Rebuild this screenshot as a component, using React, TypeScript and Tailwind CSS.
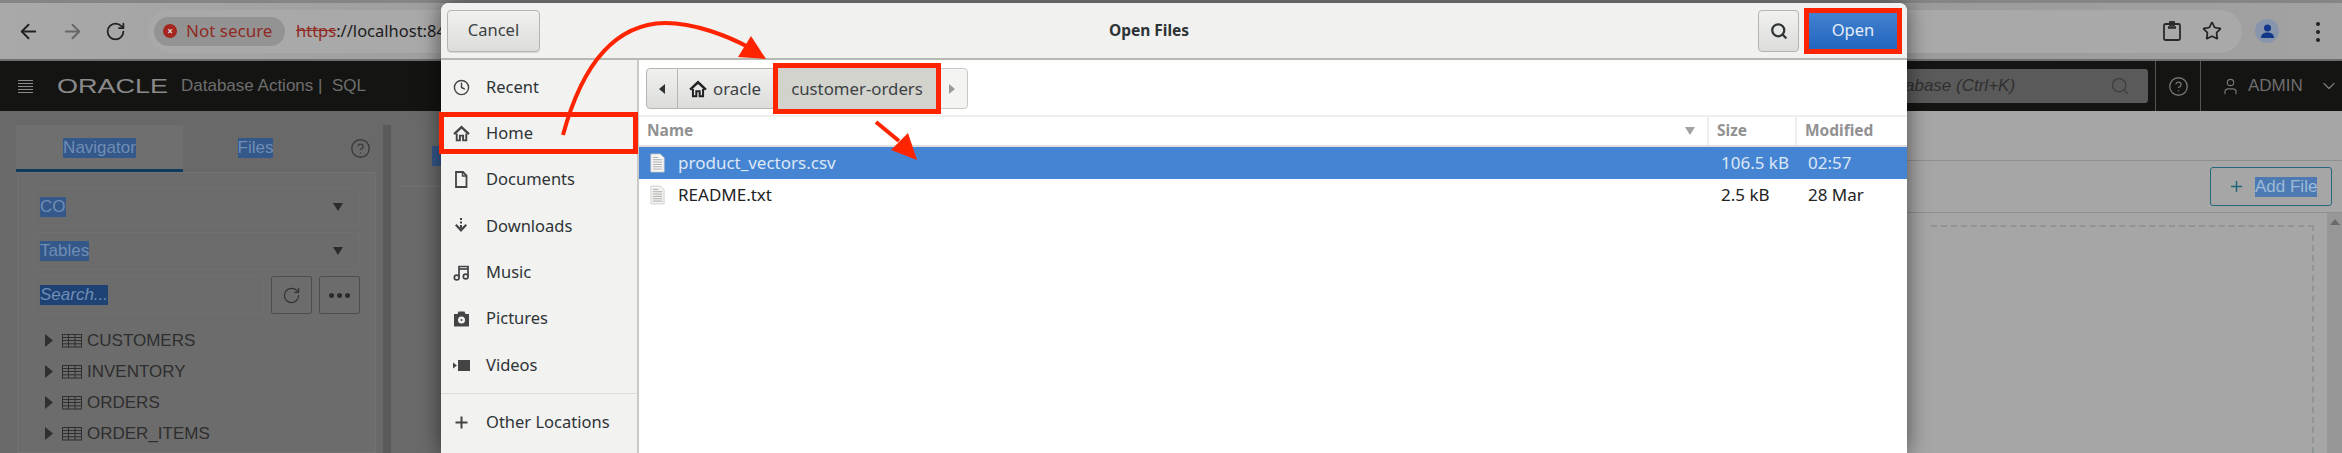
import React from "react";
import { ArrowLeft, ArrowRight, RotateCw, Star, Search, ChevronDown, Plus, CircleHelp, User, Clock } from "lucide-react";

const Tri = ({ className = "" }: { className?: string }) => (
  <svg width="16" height="10" viewBox="0 0 16 10" className={className}><path d="M3 1h10L8 9z" fill="currentColor" /></svg>
);

const HomeIcon = ({ size = 16 }: { size?: number }) => (
  <svg width={size} height={size} viewBox="0 0 16 16" fill="none" className="shrink-0">
    <path d="M1 8.500 8 2l7 6.500" stroke="currentColor" strokeWidth="2.200" />
    <path d="M3.500 8v6.500h3V10h3v4.500h3V8" stroke="currentColor" strokeWidth="1.800" />
  </svg>
);
const DocIcon = () => (
  <svg width="16" height="17" viewBox="0 0 16 17" fill="none"><path d="M3 1h7l3.500 3.500V16H3z" stroke="currentColor" strokeWidth="1.800" /><path d="M9.500 1v4h4" stroke="currentColor" strokeWidth="1.400" /></svg>
);
const DownIcon = () => (
  <svg width="16" height="16" viewBox="0 0 16 16" fill="currentColor"><rect x="7" y="0" width="2" height="2" /><rect x="7" y="3.500" width="2" height="2" /><rect x="7" y="7" width="2" height="3" /><path d="M2 7.500l1.500-1.500L8 10.500 12.500 6 14 7.500 8 14z" /></svg>
);
const MusicIcon = () => (
  <svg width="17" height="17" viewBox="0 0 17 17" fill="none" stroke="currentColor" strokeWidth="1.700"><circle cx="3.700" cy="13.500" r="2.400" /><circle cx="12.700" cy="12.500" r="2.400" /><path d="M6 13V2.500h9V12" /><path d="M6 5h9" /></svg>
);
const CamIcon = () => (
  <svg width="17" height="16" viewBox="0 0 17 16"><path fillRule="evenodd" fill="currentColor" d="M1 3h3.500l1-2.500h6l1 2.500H16v12.500H1zM8.500 5.500a3.500 3.500 0 1 0 0 7 3.500 3.500 0 0 0 0-7zM8.500 8a1 1 0 1 1 0 2 1 1 0 0 1 0-2z" /></svg>
);
const VidIcon = () => (
  <svg width="17" height="13" viewBox="0 0 17 13" fill="currentColor"><rect x="5" y="1" width="12" height="11" /><path d="M0 3.500 4 6.500 0 9.500z" /></svg>
);
const PlusIcon = () => (
  <svg width="13" height="13" viewBox="0 0 13 13" fill="currentColor"><rect x="5.500" y="0.500" width="2" height="12" /><rect x="0.500" y="5.500" width="12" height="2" /></svg>
);
const FileIcon = ({ dim = false }: { dim?: boolean }) => (
  <svg width="15" height="20" viewBox="0 0 16 20" className="shrink-0">
    <path d="M1 .5h10l4 4v15H1z" fill={dim ? "#f4f4f3" : "#fafafa"} stroke="#cfcfcc" />
    <path d="M3 4h6M3 6.500h10M3 9h10M3 11.500h10M3 14h10M3 16.500h10" stroke="#a8a8a5" strokeWidth="1" />
  </svg>
);
const TableIcon = () => (
  <svg width="20" height="14" viewBox="0 0 20 14" fill="none" stroke="#2f2f2f" strokeWidth="1" className="shrink-0">
    <rect x=".5" y=".5" width="19" height="12.500" /><path d="M.5 3.500h19M.5 6.500h19M.5 9.800h19M6.500 .5v12.500M13 .5v12.500" />
  </svg>
);

const places = [
  { t: "Recent", i: <Clock size={17} strokeWidth={2} />, h: "h-[46px]" },
  { t: "Home", i: <HomeIcon size={17} />, h: "h-[46px]" },
  { t: "Documents", i: <DocIcon />, h: "h-[47px]" },
  { t: "Downloads", i: <DownIcon />, h: "h-[46px]" },
  { t: "Music", i: <MusicIcon />, h: "h-[46px]" },
  { t: "Pictures", i: <CamIcon />, h: "h-[47px]" },
  { t: "Videos", i: <VidIcon />, h: "h-[46px]" },
];

const TreeRow = ({ t, className }: { t: string; className: string }) => (
  <div className={`flex items-center ${className}`}>
    <svg width="8" height="13" viewBox="0 0 8 13" className="ml-[12px] mr-[9px]"><path d="M0 0l8 6.500-8 6.500z" fill="#2f2f2f" /></svg>
    <TableIcon />
    <span className="ml-[5px] text-[17px] text-[#2e2e2e]">{t}</span>
  </div>
);

const SelectBox = ({ t, className = "" }: { t: string; className?: string }) => (
  <div className={`h-[38px] flex items-center justify-between border border-[#707070] rounded-[2px] pl-[6px] pr-[13px] ${className}`}>
    <span className="bg-[#34588a] text-[17px] leading-[20px] text-[#6f8db5]">{t}</span>
    <Tri className="text-[#2b2b2b]" />
  </div>
);

export default function App() {
  return (
    <div className="relative w-[2342px] h-[453px] overflow-hidden flex flex-col bg-[#a6a6a6] font-['Liberation_Sans',sans-serif]">
      {/* tab strip */}
      <div className="h-[3px] bg-[#858585] shrink-0" />
      {/* toolbar */}
      <div className="h-[58px] shrink-0 flex items-center bg-gradient-to-r from-[#a9a9a9] via-[#8f8f8f] to-[#a2a2a2] border-b-2 border-[#6e6e6e]">
        <div className="w-[148px] flex items-center pl-[17px] gap-[21px] text-[#222]">
          <ArrowLeft size={23} />
          <ArrowRight size={23} className="text-[#666]" />
          <RotateCw size={21} />
        </div>
        <div className="flex-none w-[2094px] h-[43px] rounded-full bg-[#a9a9a9] flex items-center pl-[6px] pr-[20px]">
          <div className="h-[29px] w-[131px] rounded-full bg-[#939393] flex items-center pl-[9px] gap-[9px] font-['Noto_Sans',sans-serif] text-[17px] text-[#8f2a24]">
            <span className="w-[14px] h-[14px] rounded-full bg-[#a3261f] flex items-center justify-center text-[#ddd] text-[10px] leading-none font-bold">×</span>
            Not secure
          </div>
          <span className="ml-[11px] font-['Noto_Sans',sans-serif] text-[16.500px] text-[#1c1c1c]"><span className="line-through text-[#8f2a24]">https</span>://localhost:84</span>
          <div className="ml-auto flex items-center gap-[21px] text-[#222]">
            <svg width="18" height="20" viewBox="0 0 18 20" fill="none" stroke="#2a2a2a" strokeWidth="1.800"><rect x="1" y="3" width="16" height="16" rx="1.500" /><path d="M5 6.500h8" strokeWidth="2.500" /><rect x="7" y="1" width="4" height="3" fill="#2a2a2a" /></svg>
            <Star size={20} strokeWidth={2} />
          </div>
        </div>
        <div className="flex items-center ml-[-7px] z-0 gap-[24px] pl-[20px]">
          <div className="w-[24px] h-[24px] rounded-full bg-[#8795ac] flex items-center justify-center shrink-0">
            <svg width="15" height="15" viewBox="0 0 15 15" fill="#12388c"><circle cx="7.500" cy="4" r="3.500" /><path d="M1 14c0-4 3-5.500 6.500-5.500S14 10 14 14z" /></svg>
          </div>
        </div>
      </div>
      {/* kebab sits over the toolbar's end */}
      <div className="absolute left-[2316px] top-[22px] flex flex-col gap-[4px]">
        <span className="w-[4px] h-[4px] rounded-full bg-[#222]" />
        <span className="w-[4px] h-[4px] rounded-full bg-[#222]" />
        <span className="w-[4px] h-[4px] rounded-full bg-[#222]" />
      </div>
      {/* oracle bar */}
      <div className="h-[50px] shrink-0 bg-[#141412] flex items-center text-[#777]">
        <div className="ml-[18px] w-[15px] flex flex-col gap-[2px]">
          {[0, 1, 2, 3, 4].map((i) => <span key={i} className="h-px bg-[#8a8a8a]" />)}
        </div>
        <span className="ml-[24px] w-[116px] text-[20px] leading-none text-[#8a8a8a] origin-left scale-x-[1.35]">ORACLE</span>
        <span className="ml-[8px] text-[17px] text-[#6e6e6e] whitespace-pre">Database Actions |  SQL</span>
        <div className="ml-auto h-[34px] w-[300px] bg-[#5a5a5a] rounded-[3px] flex items-center justify-between pr-[18px] pl-[57px]">
          <span className="text-[17px] italic text-[#2f2f2f] whitespace-nowrap">abase (Ctrl+K)</span>
          <Search size={20} className="text-[#3d3d3d]" strokeWidth={1.500} />
        </div>
        <div className="ml-[7px] w-[46px] h-full border-x border-[#555] flex items-center justify-center"><CircleHelp size={21} strokeWidth={1.500} /></div>
        <div className="w-[141px] flex items-center pl-[20px] gap-[8px]">
          <User size={19} strokeWidth={1.500} />
          <span className="text-[17px] text-[#6e6e6e]">ADMIN</span>
          <ChevronDown size={20} strokeWidth={1.500} className="ml-[8px]" />
        </div>
      </div>
      {/* main */}
      <div className="flex-1 flex min-h-0">
        <div className="w-[441px] shrink-0 bg-[#696969] flex pt-[14px] pl-[16px]">
          <div className="w-[360px] flex flex-col">
            <div className="flex h-[47px] items-start shrink-0">
              <div className="w-[167px] h-[47px] pt-[2px] bg-[#6f6f6f] border-b-[3px] border-[#0c3c5c] flex items-center justify-center">
                <span className="bg-[#34588a] text-[17px] leading-[20px] text-[#6f8db5]">Navigator</span>
              </div>
              <div className="w-[145px] h-[47px] pt-[2px] pb-[3px] flex items-center justify-center"><span className="bg-[#34588a] text-[17px] leading-[20px] text-[#6f8db5]">Files</span></div>
              <CircleHelp size={21} strokeWidth={1.500} className="ml-[22px] mt-[13px] text-[#3a3a3a]" />
            </div>
            <div className="flex-1 bg-[#6c6c6c] border border-[#727272] ml-px pt-[15px] px-[15px]">
              <SelectBox t="CO" />
              <SelectBox t="Tables" className="mt-[6px]" />
              <div className="flex mt-[6px] h-[38px]">
                <div className="w-[232px] border border-[#707070] rounded-[2px] pl-[6px] flex items-center">
                  <span className="bg-[#1e4274] text-[17px] leading-[20px] italic text-[#6f8db5]">Search...</span>
                </div>
                <div className="w-[41px] ml-[7px] border border-[#4e4e4e] rounded-[2px] flex items-center justify-center"><RotateCw size={19} strokeWidth={1.500} className="text-[#333]" /></div>
                <div className="w-[41px] ml-[7px] border border-[#4e4e4e] rounded-[2px] flex items-center justify-center gap-[3px]">
                  {[0, 1, 2].map((i) => <span key={i} className="w-[5px] h-[5px] rounded-full bg-[#2b2b2b]" />)}
                </div>
              </div>
              <div className="mt-[11px]">
                <TreeRow t="CUSTOMERS" className="h-[31px]" />
                <TreeRow t="INVENTORY" className="h-[31px]" />
                <TreeRow t="ORDERS" className="h-[31px]" />
                <TreeRow t="ORDER_ITEMS" className="h-[31px]" />
              </div>
            </div>
          </div>
          <div className="ml-[7px] w-[8px] bg-[#5a5a5a]" />
          <div className="ml-[8px] flex-1 bg-[#6a6a6a] flex flex-col">
            <div className="h-[62px] border-b border-[#727272] pt-[21px] pl-[33px]"><span className="block w-[9px] h-[20px] bg-[#34588a]" /></div>
          </div>
        </div>
        <div className="flex-1" />
        <div className="w-[435px] shrink-0 flex flex-col">
          <div className="h-[50px] border-b border-[#8f8f8f] shrink-0" />
          <div className="h-[52px] border-b border-[#8f8f8f] shrink-0 flex items-center justify-end pr-[10px]">
            <div className="w-[122px] h-[39px] border border-[#23687c] rounded-[3px] flex items-center pl-[17px] gap-[10px]">
              <Plus size={17} className="text-[#1f6678]" />
              <span className="bg-[#4d7ab2] text-[17px] leading-[20px] text-[#9dbbd8]">Add File</span>
            </div>
          </div>
          <div className="flex-1 flex pt-[13px]">
            <div className="flex-1 ml-[24px] -mt-px border-t-2 border-r-2 border-dashed border-[#8f9494]" />
            <div className="ml-[13px] w-[15px] -mt-[13px] bg-[#979797] flex justify-center pt-[6px]">
              <svg width="10" height="6" viewBox="0 0 10 6"><path d="M5 0l5 6H0z" fill="#6a6a6a" /></svg>
            </div>
          </div>
        </div>
      </div>

      {/* dialog */}
      <div className="absolute left-[441px] top-[3px] w-[1466px] h-[450px] rounded-t-[8px] bg-white flex flex-col shadow-[0_0_22px_rgba(0,0,0,0.55)] font-['Noto_Sans',sans-serif]">
        <div className="h-[57px] shrink-0 bg-[#f1f1f0] rounded-t-[8px] border-b-2 border-[#b8b8b3] flex items-center pl-[6px] pr-[10px] text-[#2e3436]">
          <button className="w-[93px] h-[42px] rounded-[4px] border border-[#b5b5b0] bg-gradient-to-b from-[#f1f1f0] to-[#dcdcda] text-[16.500px] text-[#3c4244] shadow-[0_1px_0_#d8d8d6]">Cancel</button>
          <div className="flex-1 text-center text-[15.500px] font-bold">Open Files</div>
          <button className="w-[41px] h-[42px] rounded-[4px] border border-[#b5b5b0] bg-gradient-to-b from-[#f1f1f0] to-[#dcdcda] flex items-center justify-center"><Search size={18} strokeWidth={3} className="text-[#2e3436]" /></button>
          <button className="ml-[10px] w-[88px] h-[36px] bg-gradient-to-b from-[#4281d0] to-[#2166bf] text-[16.500px] text-[#e6eef8] outline-[5px] outline-[#ff2400]">Open</button>
        </div>
        <div className="flex-1 flex min-h-0">
          <div className="w-[198px] shrink-0 bg-[#f2f2f1] border-r-2 border-[#c9c9c6] flex flex-col text-[#2e3436] pt-[4px]">
            {places.map((p) => (
              <div key={p.t} className={`${p.h} flex items-center shrink-0 text-[16.500px]`}>
                <div className="w-[45px] pr-[5px] flex justify-center text-[#444]">{p.i}</div>
                <span>{p.t}</span>
              </div>
            ))}
            <div className="mt-[5px] h-[1px] bg-[#dcdcda]" />
            <div className="h-[56px] flex items-center text-[16.500px]">
              <div className="w-[45px] pr-[5px] flex justify-center text-[#444]"><PlusIcon /></div>
              <span>Other Locations</span>
            </div>
          </div>
          <div className="flex-1 flex flex-col min-w-0">
            <div className="h-[57px] shrink-0 pl-[7px] pt-[8px] border-b-2 border-[#eeeeed]">
              <div className="flex h-[41px] text-[16.800px] text-[#3c4244]">
                <div className="w-[32px] rounded-l-[4px] border border-[#b5b5b0] bg-gradient-to-b from-[#f1f1f0] to-[#dcdcda] flex items-center justify-center">
                  <svg width="6" height="10" viewBox="0 0 6 10"><path d="M6 0v10L0 5z" fill="#2e3436" /></svg>
                </div>
                <div className="w-[100px] border-y border-[#b5b5b0] bg-gradient-to-b from-[#f1f1f0] to-[#dcdcda] flex items-center pl-[11px] gap-[6px]"><span className="text-[#222]"><HomeIcon size={18} /></span>oracle</div>
                <div className="w-[158px] bg-[#d3d3ce] flex items-center justify-center outline-[5px] outline-[#ff2400] z-10">customer-orders</div>
                <div className="w-[32px] rounded-r-[4px] border border-[#c8c8c4] bg-[#f4f4f3] flex items-center justify-center">
                  <svg width="6" height="10" viewBox="0 0 6 10"><path d="M0 0v10l6-5z" fill="#9a9c9c" /></svg>
                </div>
              </div>
            </div>
            <div className="h-[30px] shrink-0 flex border-b-2 border-[#dfdfdd] text-[15.500px] font-bold text-[#919191]">
              <div className="w-[1070px] flex items-center justify-between pl-[8px] pr-[9px] border-r-2 border-[#eeeeed]">Name<Tri className="text-[#a2a2a2]" /></div>
              <div className="w-[88px] flex items-center pl-[8px] border-r-2 border-[#eeeeed]">Size</div>
              <div className="flex items-center pl-[8px]">Modified</div>
            </div>
            <div className="h-[32px] shrink-0 flex items-center bg-[#4584d3] text-[17px] text-[#dce8f6]">
              <div className="w-[1070px] flex items-center pl-[11px] gap-[13px]"><FileIcon />product_vectors.csv</div>
              <div className="w-[88px] pl-[12px]">106.5 kB</div>
              <div className="pl-[11px]">02:57</div>
            </div>
            <div className="h-[32px] shrink-0 flex items-center text-[17px] text-[#222]">
              <div className="w-[1070px] flex items-center pl-[11px] gap-[13px]"><FileIcon dim />README.txt</div>
              <div className="w-[88px] pl-[12px]">2.5 kB</div>
              <div className="pl-[11px]">28 Mar</div>
            </div>
          </div>
        </div>
      </div>

      {/* annotations */}
      <div className="absolute left-[439px] top-[112px] w-[199px] h-[42px] border-[5px] border-[#ff2400]" />
      <svg className="absolute left-0 top-0 pointer-events-none" width="2342" height="453" viewBox="0 0 2342 453" fill="none">
        <path d="M563 135C580 72 610 24 665 23 695 23 728 36 750 48" stroke="#ff2400" strokeWidth="4" />
        <path d="M751 36 766 59 738 57z" fill="#ff2400" />
        <path d="M876 122 899 141" stroke="#ff2400" strokeWidth="4" />
        <path d="M908 133 917 160 891 150z" fill="#ff2400" />
      </svg>
    </div>
  );
}
